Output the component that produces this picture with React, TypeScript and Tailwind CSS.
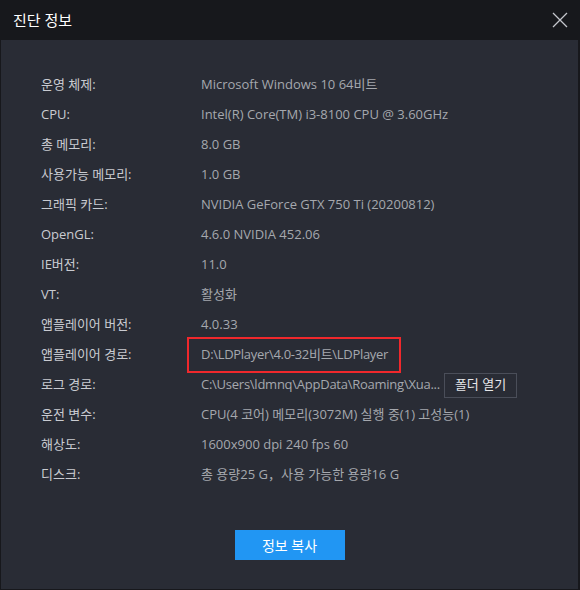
const rows: [string, string][] = [
  ["운영 체제:", "Microsoft Windows 10 64비트"],
  ["CPU:", "Intel(R) Core(TM) i3-8100 CPU @ 3.60GHz"],
  ["총 메모리:", "8.0 GB"],
  ["사용가능 메모리:", "1.0 GB"],
  ["그래픽 카드:", "NVIDIA GeForce GTX 750 Ti (20200812)"],
  ["OpenGL:", "4.6.0 NVIDIA 452.06"],
  ["IE버전:", "11.0"],
  ["VT:", "활성화"],
  ["앱플레이어 버전:", "4.0.33"],
  ["앱플레이어 경로:", "D:\\LDPlayer\\4.0-32비트\\LDPlayer"],
  ["로그 경로:", "C:\\Users\\ldmnq\\AppData\\Roaming\\Xua..."],
  ["운전 변수:", "CPU(4 코어) 메모리(3072M) 실행 중(1) 고성능(1)"],
  ["해상도:", "1600x900 dpi 240 fps 60"],
  ["디스크:", "총 용량25 G，사용 가능한 용량16 G"],
];

export default function App() {
  return (
    <div
      className="w-[580px] h-[590px] bg-[#17181c] flex flex-col overflow-hidden"
      style={{ fontFamily: '"Open Sans", "Noto Sans CJK KR", sans-serif' }}
    >
      <div className="h-[40px] shrink-0 flex items-center justify-between pl-[13px] pr-[12px]">
        <span className="text-[15px] text-white">진단 정보</span>
        <svg width="16" height="16" viewBox="0 0 16 16" className="text-[#c4c6cc]">
          <path d="M1 1L15 15M15 1L1 15" stroke="currentColor" strokeWidth="1.3" />
        </svg>
      </div>
      <div className="flex-1 ml-[1px] mr-[2px] mb-[1px] bg-[#292c35] flex flex-col">
        <div className="pt-[30px] pl-[40px] flex flex-col">
          {rows.map(([label, value], i) => (
            <div key={i} className="h-[30px] flex items-center text-[13px]">
              <span className="w-[160px] shrink-0 text-[#c9cbd1]">{label}</span>
              {i === 9 ? (
                <span className="ml-[-14px] h-[36px] w-[214px] shrink-0 pl-[12px] border-[2px] border-[#f0282c] flex items-center whitespace-nowrap tracking-[-0.3px] text-[#a5a8ae]">
                  {value}
                </span>
              ) : (
                <span className="text-[#a5a8ae] flex items-center whitespace-nowrap">
                  <span className={i === 10 ? "tracking-[-0.25px]" : ""}>{value}</span>
                  {i === 10 && (
                    <span className="ml-[4px] h-[25px] px-[10px] border border-[#4a4e59] text-[#e6e7ea] flex items-center">
                      폴더 열기
                    </span>
                  )}
                </span>
              )}
            </div>
          ))}
        </div>
        <div className="flex justify-center mt-[40px]">
          <button className="w-[110px] h-[30px] bg-[#2196f3] text-white text-[14px]">정보 복사</button>
        </div>
      </div>
    </div>
  );
}
